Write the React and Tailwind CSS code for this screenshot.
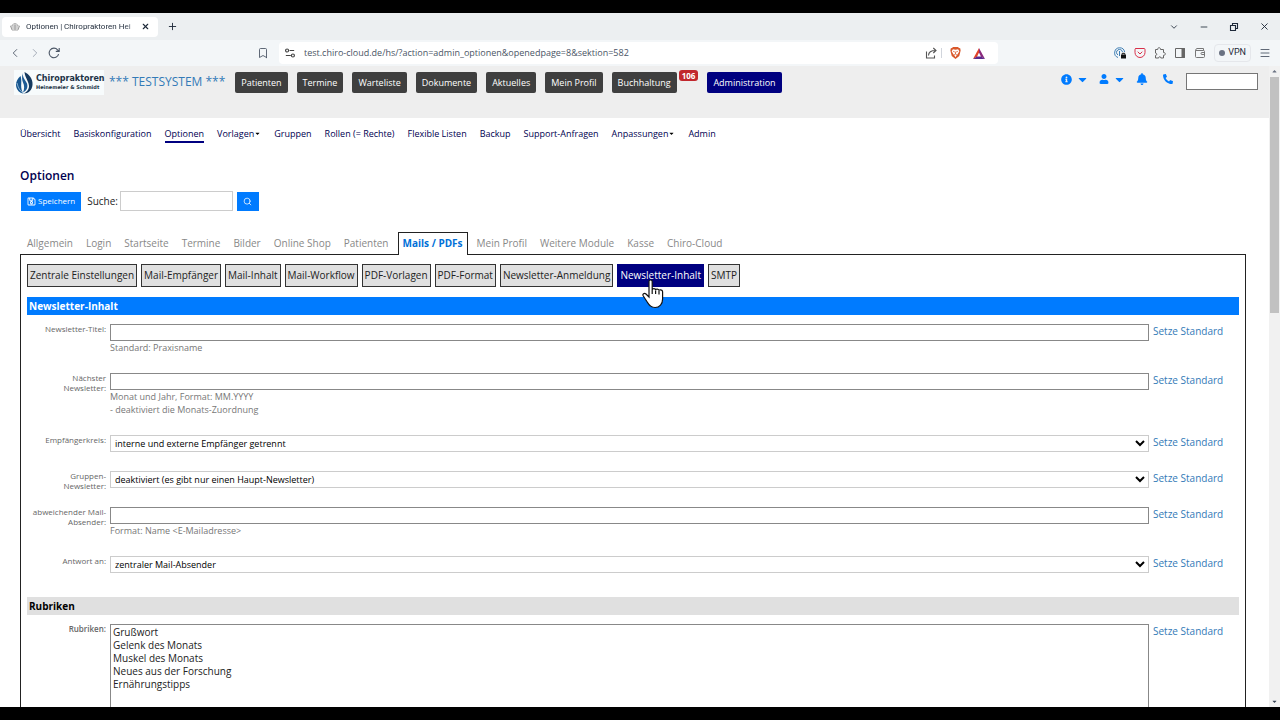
import { Bookmark, ChevronDown, ChevronLeft, ChevronRight, Menu, Minus, Plus, Search, X } from "lucide-react";
import { FaBell, FaCaretDown, FaInfoCircle, FaPhoneAlt, FaRegSave, FaUser } from "react-icons/fa";
import { FiPocket } from "react-icons/fi";

const mainNav = ["Patienten", "Termine", "Warteliste", "Dokumente", "Aktuelles", "Mein Profil", "Buchhaltung"];

const subNav = [
  { label: "Übersicht" },
  { label: "Basiskonfiguration" },
  { label: "Optionen", active: true },
  { label: "Vorlagen", menu: true },
  { label: "Gruppen" },
  { label: "Rollen (= Rechte)" },
  { label: "Flexible Listen" },
  { label: "Backup" },
  { label: "Support-Anfragen" },
  { label: "Anpassungen", menu: true },
  { label: "Admin" },
];

const tabs = ["Allgemein", "Login", "Startseite", "Termine", "Bilder", "Online Shop", "Patienten", "Mails / PDFs", "Mein Profil", "Weitere Module", "Kasse", "Chiro-Cloud"];

const sections = ["Zentrale Einstellungen", "Mail-Empfänger", "Mail-Inhalt", "Mail-Workflow", "PDF-Vorlagen", "PDF-Format", "Newsletter-Anmeldung", "Newsletter-Inhalt", "SMTP"];

const fields = [
  { id: "titel", label: "Newsletter-Titel:", hints: ["Standard: Praxisname"] },
  { id: "naechster", label: "Nächster Newsletter:", hints: ["Monat und Jahr, Format: MM.YYYY", "- deaktiviert die Monats-Zuordnung"] },
  { id: "kreis", label: "Empfängerkreis:", option: "interne und externe Empfänger getrennt" },
  { id: "gruppen", label: "Gruppen-Newsletter:", option: "deaktiviert (es gibt nur einen Haupt-Newsletter)" },
  { id: "absender", label: "abweichender Mail-Absender:", hints: ["Format: Name <E-Mailadresse>"] },
  { id: "antwort", label: "Antwort an:", option: "zentraler Mail-Absender" },
];

const rubriken = ["Grußwort", "Gelenk des Monats", "Muskel des Monats", "Neues aus der Forschung", "Ernährungstipps"];

function TabStrip() {
  return (
    <div className="flex h-[27px] shrink-0 items-center bg-[#eceff1] pl-[2px] text-gray-800">
      <div className="flex h-5 w-[156px] items-center rounded bg-white px-2">
        <svg viewBox="0 0 20 16" className="h-2 w-[10px] shrink-0" fill="none" stroke="#888" strokeWidth="1.500">
          <path d="M5 5c0-5 10-5 10 0M1 6h18M2 10h16M4 14h12M1 6l3 8M19 6l-3 8M10 2v12" />
        </svg>
        <span className="ml-[6px] flex-1 whitespace-nowrap bg-linear-to-r from-gray-800 from-85% to-gray-200 bg-clip-text font-[Roboto] text-[8px] text-transparent">
          Optionen | Chiropraktoren Hei
        </span>
        <button aria-label="Tab schließen"><X size={9} strokeWidth={3} /></button>
      </div>
      <button aria-label="Neuer Tab" className="ml-[9px]"><Plus size={11} strokeWidth={2} /></button>
      <div className="ml-auto flex items-center gap-5 pr-[10px]">
        <button aria-label="Tabs suchen"><ChevronDown size={10} /></button>
        <button aria-label="Minimieren"><Minus size={10} /></button>
        <button aria-label="Verkleinern">
          <svg viewBox="0 0 10 10" className="size-[10px]" fill="none" stroke="currentColor" strokeWidth="1.100">
            <path d="M1.500 3.500h5v5h-5zM3.500 3V1.500h5v5H7" />
          </svg>
        </button>
        <button aria-label="Schließen"><X size={11} /></button>
      </div>
    </div>
  );
}

function Toolbar() {
  return (
    <div className="flex h-[26px] shrink-0 items-center bg-[#f3f6f8] text-gray-600">
      <div className="flex flex-1 items-center pl-[8px]">
        <button aria-label="Zurück"><ChevronLeft size={14} strokeWidth={1.5} /></button>
        <button aria-label="Vor" className="ml-[6px] text-gray-400"><ChevronRight size={14} strokeWidth={1.5} /></button>
        <button aria-label="Neu laden" className="ml-[6px]">
          <svg viewBox="0 0 12 12" className="size-3" fill="none" stroke="currentColor" strokeWidth="1.100">
            <path d="M10.600 7.200A4.800 4.800 0 1 1 9.600 2.800L11 4.300M11.200 1v3.400H7.800" />
          </svg>
        </button>
        <button aria-label="Lesezeichen" className="mr-[10px] ml-auto"><Bookmark size={12} strokeWidth={1.75} /></button>
      </div>
      <div className="flex h-[22px] w-[719px] items-center rounded bg-white pr-[13px] pl-[6px]">
        <svg viewBox="0 0 12 12" className="size-[10px] shrink-0" fill="none" stroke="#444" strokeWidth="1.400">
          <circle cx="2.500" cy="3" r="1.800" />
          <circle cx="9.500" cy="9" r="1.800" />
          <path d="M5.500 3H11M1 9h6" />
        </svg>
        <input
          aria-label="Adresse"
          readOnly
          value="test.chiro-cloud.de/hs/?action=admin_optionen&openedpage=8&sektion=582"
          className="ml-[9px] min-w-0 flex-1 bg-transparent text-[9px] text-gray-600"
        />
        <button aria-label="Teilen">
          <svg viewBox="0 0 12 12" className="size-3" fill="none" stroke="#555" strokeWidth="1.100">
            <path d="M1.500 4.500v6.500h8V8.500M3.500 8.500c0-3.500 2.500-5 7-5M8.300 1l2.700 2.500L8.300 6" />
          </svg>
        </button>
        <span className="mx-[4px] h-[10px] w-px bg-gray-300" />
        <button aria-label="Brave Shields" className="ml-1">
          <svg viewBox="0 0 12 14" className="h-3 w-[11px]">
            <path d="M3 0h6l1 1.300L11.500 1.500 12 4l-1.600 6.500L6 14 1.600 10.500 0 4l.5-2.500L2 1.300z" fill="#d9582b" />
            <path d="M3 2.500l3 .6 3-.6L10.500 5l-2 3.600-1 .6L6 12 4.500 9.200l-1-.6L1.500 5z" fill="#fff" />
            <path d="M3.200 5l2 .8M8.800 5l-2 .8M6 5.500v3M4.500 9L6 8l1.500 1" stroke="#d9582b" strokeWidth=".9" fill="none" />
          </svg>
        </button>
        <button aria-label="Rewards" className="ml-3">
          <svg viewBox="0 0 12 11" className="h-[11px] w-3">
            <path d="M6 0L0 11l4-2.300L6 4.600z" fill="#e2432a" />
            <path d="M6 0l6 11-4-2.300-2-4.100z" fill="#8b2a7c" />
            <path d="M0 11h12L8 8.500H4z" fill="#5a2a8c" />
          </svg>
        </button>
      </div>
      <div className="flex w-[282px] items-center justify-end gap-2 pr-[9px]">
        <svg viewBox="0 0 12 12" className="size-3" fill="none" stroke="#3f7fb5" strokeWidth="1">
          <path d="M4 10.500A5 5 0 1 1 10.600 5M4 8A3 3 0 1 1 8.500 5M5.500 4v5" />
          <path d="M7 7.500h5v4H7z" fill="#111" stroke="none" />
          <path d="M8.200 7.500V6.300h2.500v1.200" stroke="#111" />
        </svg>
        <FiPocket size={12} className="text-[#d8304a]" />
        <svg viewBox="0 0 12 12" className="size-3" fill="none" stroke="#666">
          <path d="M1.500 2.500h2.200c-.3-2.400 3.100-2.400 2.800 0h3v3c2.400-.3 2.400 3.100 0 2.800v2.700H6.800c.2-1.700-2.300-1.700-2.100 0H1.500V8.400c1.700.2 1.700-2.500 0-2.300z" />
        </svg>
        <svg viewBox="0 0 12 12" className="size-3" fill="none" stroke="#666">
          <path d="M1.500 1.500h9v9h-9z" />
          <path d="M8 1.500h2.500v9H8z" fill="#666" />
        </svg>
        <svg viewBox="0 0 12 12" className="size-3" fill="none" stroke="#777">
          <path d="M1.500 3.500v6q0 1 1 1h7q1 0 1-1v-5q0-1-1-1h-8q0-1.500 1.500-2h6.500v2M10.500 5.500H8q-1 0-1 1t1 1h2.500" />
        </svg>
        <button className="flex h-[18px] items-center gap-[3px] rounded border border-gray-200 px-1 font-[Roboto] text-[9px] text-gray-800">
          <span className="size-[6px] rounded-full bg-gray-500" />VPN
        </button>
        <button aria-label="Menü"><Menu size={12} strokeWidth={1.75} /></button>
      </div>
    </div>
  );
}

function Header() {
  return (
    <header className="flex h-[52px] shrink-0 items-start bg-[#eee] pt-1 pr-[11px] pl-[14px]">
      <a href="#" className="flex h-[25px] w-[90px] items-center gap-[3px] bg-[#f7fbfc] pl-[2px] font-['DejaVu_Sans'] font-bold text-[#1c3346]">
        <svg viewBox="0 0 17 22" className="h-[22px] w-[17px] shrink-0">
          <path d="M8.500 0C13 2 17 7 16.500 13c-.5 5-4 8.500-9 8.500 3-1 5-3.500 5.500-6.500C13.500 10 9 6 8.500 0z" fill="#15395f" />
          <path d="M7 1C6 5 9.500 8 11 11.500c1.200 4-.5 7.500-4 9C8.500 17 8.500 13.500 7 10.500 6 8 5.500 4 7 1z" fill="#1d5b95" />
          <path d="M4.500 4C1 7-.5 11 .2 14.500c.6 3.500 3.300 6.500 7.300 7-2-2.500-2.500-5.500-2.300-9C5.300 9 5.500 7 4.500 4z" fill="#17568f" />
          <path d="M1 11c1 4.500 3 8 6 10" stroke="#b6d3e8" strokeWidth=".7" fill="none" />
        </svg>
        <span className="whitespace-nowrap">
          <span className="block text-[8px] leading-[9px]">Chiropraktoren</span>
          <span className="block text-[5px] leading-[8px]">Heinemeier &amp; Schmidt</span>
        </span>
      </a>
      <a href="#" className="ml-[5px] pt-1 text-[12px] leading-[16px] whitespace-nowrap text-[#337ab7]">*** TESTSYSTEM ***</a>
      <nav className="ml-[10px] flex gap-[9px] pt-[2px] text-[9px] text-white">
        {mainNav.map((item) => (
          <button key={item} className="h-[21px] rounded-[2px] bg-[#3f3f3f] px-[6px] whitespace-nowrap">{item}</button>
        ))}
        <span className="-mt-[2px] -ml-[7px] h-[11px] rounded-[3px] bg-[#c1272d] px-[3px] text-[8px] leading-[11px] font-bold">106</span>
        <button className="h-[21px] rounded-[2px] bg-[#000080] px-[6px] whitespace-nowrap">Administration</button>
      </nav>
      <div className="ml-auto flex items-start pt-[3px] text-[#007bff]">
        <button aria-label="Info" className="flex h-3 items-center gap-1"><FaInfoCircle size={11} /><FaCaretDown size={13} /></button>
        <button aria-label="Benutzer" className="ml-[10px] flex h-3 items-center gap-1"><FaUser size={10} /><FaCaretDown size={13} /></button>
        <button aria-label="Hinweise" className="ml-[10px] flex h-3 items-center"><FaBell size={12} /></button>
        <button aria-label="Telefon" className="ml-[15px] flex h-3 items-center"><FaPhoneAlt size={10} /></button>
        <input aria-label="Schnellsuche" className="ml-[13px] h-[17px] w-[72px] border border-[#767676] bg-white" />
      </div>
    </header>
  );
}

function Row({ id, label, bold, children }) {
  return (
    <div className="flex items-start">
      <label htmlFor={id} className={"-mb-1 w-[79px] shrink-0 pl-1 text-right text-[8px] leading-[10px] text-[#666] " + (bold ? "font-semibold" : "")}>{label}</label>
      <div className="ml-1 flex-1">{children}</div>
      <a href="#" className="ml-1 w-[86px] shrink-0 text-[10px] leading-[14px] text-[#337ab7]">Setze Standard</a>
    </div>
  );
}

function Panel() {
  return (
    <section className="relative mx-5 mr-[23px] flex-1 border border-b-0 border-[#222] px-[6px] pt-[9px]">
      <div className="flex gap-1 text-[10px] text-[#222]">
        {sections.map((s) => (
          <button
            key={s}
            className={"h-[23px] border px-[2px] whitespace-nowrap " + (s === "Newsletter-Inhalt" ? "border-[#000080] bg-[#000080] text-white" : "border-[#333] bg-[#e0e0e0]")}
          >
            {s}
          </button>
        ))}
      </div>
      <svg viewBox="0 0 22 30" className="absolute top-[24px] left-[621px] h-[30px] w-[22px]" fill="#fff" stroke="#111" strokeWidth="1.200">
        <path d="M7 2.500c0-2 3.200-2 3.200 0V11c0-1.800 3.400-1.800 3.400.3 0-1.800 3.400-1.600 3.400.5 0-1.600 3.600-1.200 3.600 1V20c0 5-3 8.500-7.500 8.500S7 26 5.200 23L1.300 17c-1.200-2 1-3.500 2.700-2L7 18z" />
        <path d="M10.200 11v4M13.600 11.500V15M17 12v3.500" />
      </svg>
      <h2 className="mt-[10px] h-[18px] bg-[#007bff] pl-[2px] text-[10px] leading-[18px] font-bold text-white">Newsletter-Inhalt</h2>
      <div className="mt-[9px]">
        {fields.map((f) => (
          <div key={f.id} className="pb-[19px]">
            <Row id={f.id} label={f.label}>
              {f.option ? (
                <select id={f.id} className="block h-[17px] w-full border border-[#ccc] bg-white text-[9px] text-black">
                  <option>{f.option}</option>
                </select>
              ) : (
                <input id={f.id} className="block h-[17px] w-full border border-[#888] px-1 text-[10px]" />
              )}
              {f.hints && f.hints.map((h) => <p key={h} className="text-[9px] leading-[13px] text-[#777]">{h}</p>)}
            </Row>
          </div>
        ))}
      </div>
      <h2 className="mt-[5px] h-[18px] bg-[#e0e0e0] pl-[2px] text-[10px] leading-[18px] font-bold text-black">Rubriken</h2>
      <div className="mt-[9px]">
        <Row id="rubriken" label="Rubriken:" bold>
          <select id="rubriken" multiple size={10} className="block h-[140px] w-full border border-[#888] bg-white text-[10px] text-[#222]">
            {rubriken.map((r) => <option key={r} className="h-[13px] px-[2px] leading-[13px]">{r}</option>)}
          </select>
        </Row>
      </div>
    </section>
  );
}

export default function App() {
  return (
    <div className="flex h-screen flex-col overflow-hidden bg-black py-[13px] font-['Open_Sans',sans-serif]">
      <TabStrip />
      <Toolbar />
      <div className="flex min-h-0 flex-1 bg-white">
        <main className="flex min-w-0 flex-1 flex-col overflow-hidden">
          <Header />
          <nav className="mt-[8px] flex gap-[13px] pl-5 text-[9px] leading-[15px] text-[#000050]">
            {subNav.map((n) => (
              <a key={n.label} href="#" className={"flex items-center whitespace-nowrap border-b-2 " + (n.active ? "border-[#000080]" : "border-transparent")}>
                {n.label}
                {n.menu && <FaCaretDown size={7} className="text-black" />}
              </a>
            ))}
          </nav>
          <h1 className="mt-[24px] pl-5 text-[12px] leading-[18px] font-semibold text-[#000050]">Optionen</h1>
          <form className="mt-[6px] flex items-center pl-[21px]">
            <button type="button" className="flex h-[19px] items-center gap-[2px] bg-[#007bff] px-[6px] text-[8px] text-white"><FaRegSave size={9} />Speichern</button>
            <label htmlFor="suche" className="ml-[6px] text-[10px] text-[#222]">Suche:</label>
            <input id="suche" className="ml-[2px] h-5 w-[113px] border border-[#ccc] px-1 text-[10px]" />
            <button type="button" aria-label="Suchen" className="ml-1 flex h-[19px] w-[22px] items-center justify-center bg-[#007bff] text-white"><Search size={9} /></button>
          </form>
          <nav className="relative z-10 mt-[21px] -mb-px flex gap-px pl-[21px] text-[10px] text-[#888]">
            {tabs.map((t) => (
              <a
                key={t}
                href="#"
                className={"h-[23px] whitespace-nowrap border border-b-0 leading-[20px] " + (t === "Mails / PDFs" ? "mx-[2px] border-[#222] bg-white px-1 font-bold text-[#0070d8]" : "border-transparent px-[5px]")}
              >
                {t}
              </a>
            ))}
          </nav>
          <Panel />
        </main>
        <div className="flex w-[11px] shrink-0 flex-col items-center bg-[#f1f1f1]">
          <FaCaretDown size={7} className="my-[2px] rotate-180 text-gray-500" />
          <div className="h-[236px] w-[9px] bg-[#c1c1c1]" />
          <FaCaretDown size={7} className="mt-auto mb-[2px] text-gray-700" />
        </div>
      </div>
    </div>
  );
}
